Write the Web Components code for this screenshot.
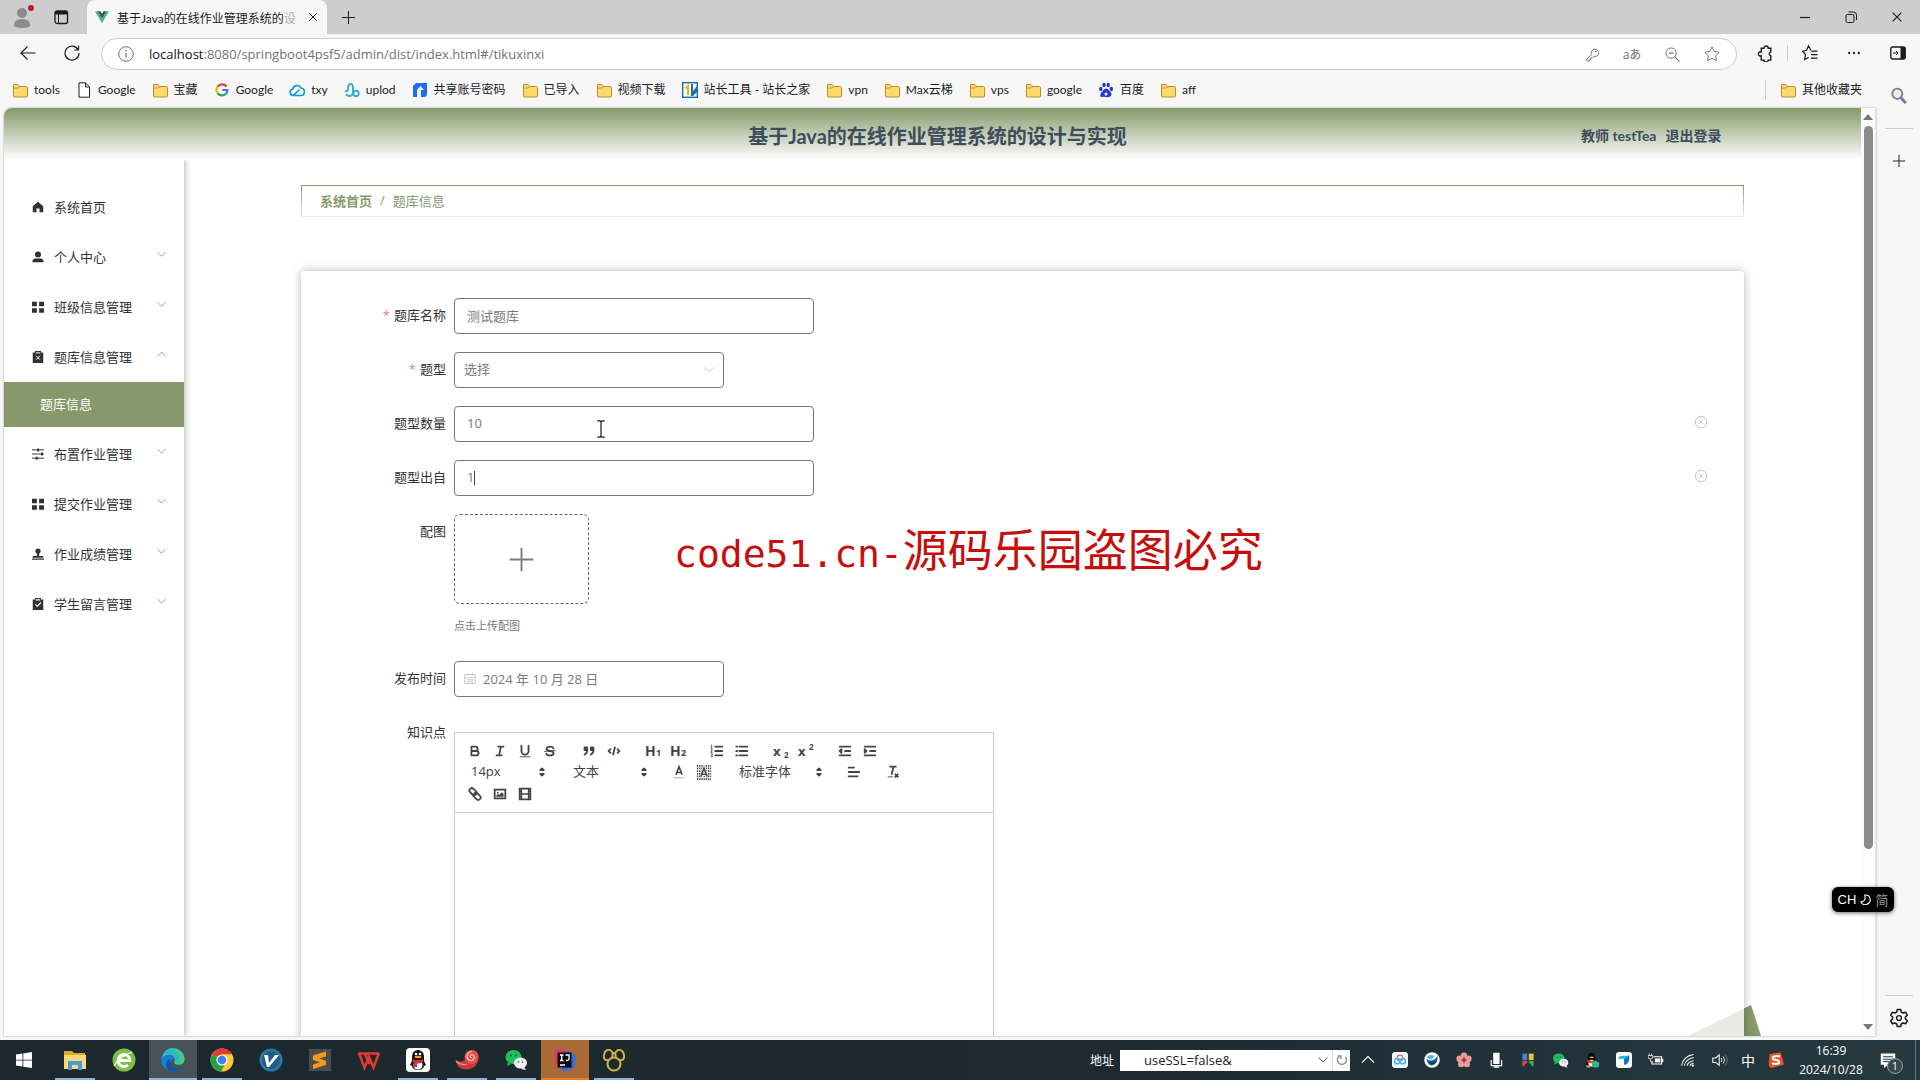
<!DOCTYPE html>
<html lang="zh-CN">
<head>
<meta charset="utf-8">
<title>基于Java的在线作业管理系统的设计与实现</title>
<style>
html,body{margin:0;height:100%}
body{overflow:hidden;font-family:"Open Sans","Noto Sans CJK SC",sans-serif;font-size:12px;color:#1b1b1b;background:#f7f7f7}
</style>
</head>
<body>
<desktop-shell></desktop-shell>
<script>
const FOLDER='<path d="M1.5 2.5h4.5l1.500 2h7q1 0 1 1v8.500q0 1-1 1h-12q-1 0-1-1z" fill="#ffd96b" stroke="#b98d2b"/><path d="M1.500 6h4.500l2-1.500" fill="none" stroke="#c79a35"/>';
const WECHAT='<ellipse cx="9.500" cy="9" rx="8" ry="7" fill="#1fc05c"/><path d="M4 14l-1 4 4-2z" fill="#1fc05c"/><circle cx="7" cy="7.500" r="1" fill="#0c5a2a"/><circle cx="12" cy="7.500" r="1" fill="#0c5a2a"/><ellipse cx="16.500" cy="15" rx="6.500" ry="5.500" fill="#f2f2f2"/><path d="M20 19l2 3-5-1z" fill="#f2f2f2"/><circle cx="14.500" cy="14" r=".9" fill="#777"/><circle cx="18.500" cy="14" r=".9" fill="#777"/>';
const S='fill="none" stroke="currentColor"';
/* name: [viewBox side, markup] */
const ICONS={
 folder:[16,FOLDER],
 profile:[24,'<circle cx="11" cy="8" r="5" fill="#8f8b8a"/><path d="M3 20q0-6 8-6t8 6q0 3-8 3t-8-3z" fill="#8f8b8a"/><circle cx="20" cy="3" r="3" fill="#b3202c"/>'],
 tabs:[16,`<rect x="2" y="2" width="12.500" height="12.500" rx="2" ${S} stroke-width="1.300"/><path d="M2 3.500q0-1.500 1.500-1.500h9.500q1.500 0 1.500 1.500V5.500H2z"/><path d="M5.500 5v9" ${S}/>`],
 vue:[16,'<path d="M0 1.500h3.200L8 9.800l4.800-8.300H16L8 15z" fill="#41b883"/><path d="M3.200 1.500h3L8 4.600l1.800-3.100h3L8 9.800z" fill="#35495e"/>'],
 close:[16,`<path d="M3 3l10 10M13 3L3 13" ${S} stroke-width="1.300"/>`],
 plus:[16,`<path d="M8 1v14M1 8h14" ${S} stroke-width="1.100"/>`],
 min:[16,`<path d="M3 8.500h10" ${S} stroke-width="1.200"/>`],
 restore:[16,`<rect x="3" y="5.500" width="8" height="8" rx="1.500" ${S}/><path d="M5.500 3h5q3 0 3 3v5" ${S}/>`],
 back:[16,`<path d="M15.500 8H1M7.500 1.500L1 8l6.500 6.500" ${S} stroke-width="1.100"/>`],
 reload:[16,`<path d="M14 4.500A7 7 0 1 0 15 8M14.500.8V5h-4.200" ${S} stroke-width="1.200"/>`],
 info:[16,`<circle cx="8" cy="8" r="7.300" ${S}/><path d="M8 7v4.500M8 4.300v1.400" ${S} stroke-width="1.200"/>`],
 key:[16,`<path d="M7 8.200A4 4 0 1 1 9.400 10.200L8 11.500H6.500V13H5v1.700H1.800V13z" ${S}/><circle cx="11.500" cy="4.700" r=".9"/>`],
 zoomout:[16,`<circle cx="6.500" cy="6.500" r="5.500" ${S}/><path d="M10.500 10.500l5 5M4 6.500h5" ${S} stroke-width="1.200"/>`],
 star:[16,`<path d="M8 .9l2.200 4.600 5 .7-3.600 3.500.9 5L8 12.300l-4.500 2.400.9-5L.8 6.200l5-.7z" ${S}/>`],
 puzzle:[16,`<path d="M4 3h2.500a2 2 0 0 1 4 0H13v3.500a1.900 1.900 0 0 0 0 3.700v4h-2.500a2 2 0 0 1-4 0H4v-4a2 2 0 1 1 0-3.700z" ${S} stroke-width="1.300"/>`],
 favs:[16,`<path d="M9 5.500L6.500.8 4.500 5.500l-4 .7 3 3.300-.9 5 4-2.300M9.500 6.200H15.500M9 9.700h6.500M9 13.200h6.500" ${S} stroke-width="1.200"/>`],
 more:[16,'<circle cx="2.500" cy="8" r="1.300"/><circle cx="8" cy="8" r="1.300"/><circle cx="13.500" cy="8" r="1.300"/>'],
 panel:[16,`<rect x=".8" y="2" width="14.400" height="12" rx="2" ${S} stroke-width="1.400"/><path d="M10.500 2h3q2 0 2 2v8q0 2-2 2h-3z"/><path d="M3 8h5M6 6l2 2-2 2" ${S}/>`],
 doc:[16,'<path d="M3 .8h6.500L13.500 5v10.200H3zM9.500.8V5h4" fill="#fff" stroke="#222"/>'],
 google:[18,'<path d="M14 5A6.200 6.200 0 0 0 4 5.500" fill="none" stroke="#e34133" stroke-width="2.500"/><path d="M3.800 5.700a6 6 0 0 0 0 6.600" fill="none" stroke="#f3b605" stroke-width="2.500"/><path d="M4 12.500a6.200 6.200 0 0 0 9.200 1" fill="none" stroke="#32a350" stroke-width="2.500"/><path d="M9.300 9h5.700q0 3-1.800 4.700" fill="none" stroke="#3b7ded" stroke-width="2.500"/>'],
 txy:[16,'<path d="M4 13.500a3.200 3.200 0 0 1-.3-6.300A4.400 4.400 0 0 1 12 6a3.800 3.800 0 0 1 .5 7.500H4.500l6-6" fill="none" stroke="#159ad8" stroke-width="1.700"/>'],
 uplod:[16,'<path d="M1 9q3 1 3-2 0-5 2.500-5T9 6v4q0 4-3 4T2 12" fill="none" stroke="#37a9d6" stroke-width="1.900"/><circle cx="12" cy="11.500" r="2.700" fill="none" stroke="#37a9d6" stroke-width="1.900"/>'],
 share:[16,'<path d="M4 1h11v11q0 3-3 3H9V8h3L8.500 4 5 8v7H1V4z" fill="#1f6df0"/>'],
 zhan:[16,'<rect x=".7" y=".7" width="14.600" height="14.600" fill="#fff" stroke="#1b6fa8" stroke-width="1.400"/><path d="M2 6l5-4v11H5V7z" fill="#f2b31b"/><path d="M9 2h2v7l4-5v6l-4 4H9z" fill="#1b6fa8"/>'],
 baidu:[16,'<g fill="#2a37d4"><ellipse cx="2.800" cy="7" rx="1.700" ry="2.200"/><ellipse cx="6" cy="3" rx="1.700" ry="2.300"/><ellipse cx="10.200" cy="3" rx="1.700" ry="2.300"/><ellipse cx="13.300" cy="7" rx="1.700" ry="2.200"/><path d="M8 6.500q2 0 3.200 2.300 3 2.200 2 4.700Q12 15.700 8 15t-5 .2q-2-3 1.500-6Q6 6.500 8 6.500z"/></g><circle cx="8" cy="12" r="1.500" fill="#fff"/>'],
 search:[16,'<circle cx="6.500" cy="6" r="4.500" fill="#e6eef6" stroke="#7c7c80" stroke-width="1.600"/><path d="M10 9.800l4 4.500" stroke="#8068b5" stroke-width="2.500"/>'],
 gear:[20,`<path d="M8.300 1.500h3.400l.6 2.500 1.800 1 2.500-.8 1.700 3-1.900 1.800v2l1.900 1.800-1.700 3-2.500-.8-1.800 1-.6 2.500H8.300L7.700 16l-1.800-1-2.500.8-1.700-3L3.600 11V9L1.700 7.200l1.700-3 2.500.8 1.800-1z" ${S} stroke-width="1.500" stroke-linejoin="round"/><circle cx="10" cy="10" r="2.400" ${S} stroke-width="1.400"/>`],
 home:[16,'<path d="M8 1l7 6v8h-5v-5H6v5H1V7z"/>'],
 user:[16,'<circle cx="8" cy="4.500" r="4"/><path d="M.5 15q0-5 4.500-5h6q4.500 0 4.500 5z"/>'],
 grid:[16,'<path d="M0 1h6.500v6H0zM9.500 1H16v6H9.500zM0 9.500h6.500v6H0zM9.500 9.500H16v6H9.500z"/>'],
 clipx:[16,'<path d="M1 2h3V0h8v2h3v14H1z"/><path d="M5 2.500h6M5.500 6.500l5 5M10.500 6.500l-5 5" stroke="#fff" stroke-width="1.300"/>'],
 clipcheck:[16,'<path d="M1 2h3V0h8v2h3v14H1z"/><path d="M5 2.500h6M4.500 8.500l2.500 2.500 5-5" fill="none" stroke="#fff" stroke-width="1.500"/>'],
 sliders:[16,`<path d="M0 2.500h16M0 8h16M0 13.500h16" ${S} stroke-width="1.300"/><path d="M7 .5h2.500v4H7zM12 6h2.500v4H12zM5 11.500h2.500v4H5z"/>`],
 stamp:[16,'<circle cx="8" cy="4" r="3.500"/><path d="M6.500 6h3v4.500H15v2.500H1v-2.500h5.500zM0 14h16v1.500H0z"/>'],
 down:[16,`<path d="M1 4l7 7 7-7" ${S} stroke-width="1.300"/>`],
 up:[16,`<path d="M1 11l7-7 7 7" ${S} stroke-width="1.300"/>`],
 clear:[16,`<circle cx="8" cy="8" r="6.500" ${S}/><path d="M6 6l4 4M10 6l-4 4" ${S}/>`],
 calendar:[16,`<path d="M1 2h14v12H1zM1 6h14M4.500 .5v3M11.500 .5v3M3.500 9h9M3.500 11.500h9" ${S}/>`],
 bold:[18,`<path d="M5 4H9.500a2.500 2.500 0 0 1 0 5H5zM5 9h5.500a2.500 2.500 0 0 1 0 5H5z" ${S} stroke-width="2" stroke-linejoin="round"/>`],
 italic:[18,`<path d="M7 4h6M5 14h6M8 14L10 4" ${S} stroke-width="2" stroke-linecap="round"/>`],
 underline:[18,`<path d="M5 3v6a4 4 0 0 0 8 0V3" ${S} stroke-width="2" stroke-linecap="round"/><path d="M3 15.500h12" ${S}/>`],
 strike:[18,`<path d="M13 6Q12 4 9 4T5 6.500Q5 8.500 9 9t4 2.500Q13 14 9 14t-4-2" ${S} stroke-width="2" stroke-linecap="round"/><path d="M15.500 8.500l-13 1" stroke="currentColor"/>`],
 quote:[18,`<path d="M4 5h3v3H4zM11 5h3v3h-3z" fill="currentColor" stroke="currentColor" stroke-width="2" stroke-linejoin="round"/><path d="M7 8c0 4-3 5-3 5M14 8c0 4-3 5-3 5" ${S} stroke-width="2" stroke-linecap="round"/>`],
 code:[18,`<path d="M5 7L3 9l2 2M13 7l2 2-2 2M10 5L8 13" ${S} stroke-width="2" stroke-linecap="round"/>`],
 ol:[18,`<path d="M7 4h8M7 9h8M7 14h8" ${S} stroke-width="2" stroke-linecap="round"/><path d="M2 2.500h1V6M2 6.500h2M2 8h1.500q.5 1-1.500 2.500h2M2 12.500h2l-1 1.500q1 0 1 1t-2 .5" ${S}/>`],
 ul:[18,`<path d="M6 4h9M6 9h9M6 14h9M2.500 4h1M2.500 9h1M2.500 14h1" ${S} stroke-width="2" stroke-linecap="round"/>`],
 outdent:[18,`<path d="M3 14h12M3 4h12M9 9h6" ${S} stroke-width="2" stroke-linecap="round"/><path d="M5 7v4L3 9z" stroke="currentColor" stroke-width="2" stroke-linejoin="round"/>`],
 indent:[18,`<path d="M3 14h12M3 4h12M9 9h6" ${S} stroke-width="2" stroke-linecap="round"/><path d="M3 7v4l2-2z" stroke="currentColor" stroke-width="2" stroke-linejoin="round"/>`],
 color:[18,`<path d="M5.500 12L9 3l3.500 9M6.500 9.500h5" ${S} stroke-width="1.800"/><path d="M3 15.500h12" ${S} stroke-opacity=".5"/>`],
 background:[18,`<path d="M1 2h16M1 5h16M1 8h16M1 11h16M1 14h16M1 17h16" ${S} stroke-width="2" stroke-dasharray="1.500 1"/><path d="M6 14L9 5l3 9M7 11.500h4" fill="none" stroke="#fff" stroke-width="3.500"/><path d="M5.500 14L9 4.500l3.500 9.500M6.500 11.500h5" ${S} stroke-width="1.800"/>`],
 align:[18,`<path d="M3 9h12M3 14h10M3 4h6" ${S} stroke-width="2" stroke-linecap="round"/>`],
 clean:[18,`<path d="M5 3h8M9.600 3L7.400 12M11 11l4 4M15 11l-4 4" ${S} stroke-width="2"/><path d="M3 14.500h6" ${S}/>`],
 link:[18,`<g transform="rotate(45 9 9)"><rect x="1" y="6" width="9" height="5.500" rx="2.700" ${S} stroke-width="2"/><rect x="8" y="6.500" width="9" height="5.500" rx="2.700" ${S} stroke-width="2"/></g>`],
 image:[18,`<path d="M3 4h12v10H3z" ${S} stroke-width="2"/><circle cx="6.500" cy="7.500" r="1"/><path d="M5 12v-2l2-1 1 1 3-3 2 2v3z"/>`],
 video:[18,`<path d="M3 3h12v12H3z" ${S} stroke-width="2"/><path d="M5 3v12M13 3v12M5 9h8M3 6h2M3 9h2M3 12h2M13 6h2M13 9h2M13 12h2" ${S} stroke-width="1.600"/>`],
 updown:[18,`<path d="M7 11l2 2 2-2zM7 7l2-2 2 2z" stroke="currentColor" stroke-width="2" stroke-linejoin="round"/>`],
 windows:[16,'<path d="M0 2.500l6.500-1V7.700H0zM7.300 1.400L16 0v7.700H7.300zM0 8.400h6.500v6.200L0 13.600zM7.300 8.400H16V16l-8.700-1.300z" fill="#fff"/>'],
 explorer:[24,'<path d="M1 3h8l2 2h11v3H1z" fill="#e0a92e"/><path d="M1 7h22v14H1z" fill="#f9d977"/><path d="M5 13h14v9h-4v-5H9v5H5z" fill="#469bd8"/>'],
 greene:[24,'<circle cx="12" cy="12" r="11.500" fill="#7ac143"/><path d="M6 12.500h12a6 6 0 1 0-2 4.500" fill="none" stroke="#fff" stroke-width="2.800"/><path d="M2 18Q7 9 20 4" fill="none" stroke="#fff" stroke-width="1.300"/>'],
 edge:[24,'<path d="M.5 12A11.500 11.500 0 0 1 23.500 11q0 5.500-6 5.500-4.500 0-4.500-2.500 2-4-2-6.500T.5 12z" fill="#2fb9c4"/><path d="M12 .5A11.500 11.500 0 0 1 23.500 11q0 5.500-6 5.500-3 0-4-1.500 7 0 5-6T12 .5z" fill="#4fce7a"/><path d="M.5 12q1.500-5 7.500-5 4 .5 5 4-5 1-4 6t9 5Q12 25 6 21.500T.5 12z" fill="#1581d6"/><path d="M9 14q0 7 7 7 3 0 5.500-2.500-3 5-9.500 5-7 0-7-7 .500-4.500 4-5.500z" fill="#0f56ab"/>'],
 chrome:[24,'<circle cx="12" cy="12" r="11.500" fill="#fcc934"/><path d="M12 12L2 6.200A11.500 11.500 0 0 1 22 6.200H12z" fill="#e33b2e"/><path d="M2 6.200A11.500 11.500 0 0 0 11 23.500l5-9z" fill="#25a049"/><circle cx="12" cy="12" r="5.600" fill="#fff"/><circle cx="12" cy="12" r="4.400" fill="#3f7fe8"/>'],
 vapp:[24,'<circle cx="12" cy="12" r="11.500" fill="#2c79a8"/><circle cx="12" cy="12" r="9" fill="#215c85"/><path d="M5 7h4l1 8 6-8h4L10 19H8z" fill="#fff"/>'],
 sublime:[24,'<path d="M1 1h22v22H1z" fill="#4c4c4c"/><path d="M5 7.500l13-4v5l-7 2 7 2.300V17l-13 4v-4.500l7-2.300-7-2.200z" fill="#f89b1c"/>'],
 wps:[24,'<path d="M1 5.500h21M2 5l5.500 14.500L12 9l4.500 10.500L22 5M7.500 5l5 11" fill="none" stroke="#e33a2f" stroke-width="2.600"/>'],
 qq:[24,'<rect x="0" y="0" width="24" height="24" rx="4" fill="#fff"/><path d="M6 13Q5 2 12 2t6 11l2 4-2 1q-1 4-6 4t-6-4l-2-1z" fill="#111"/><ellipse cx="12" cy="17" rx="4.500" ry="4.500" fill="#fff"/><path d="M7 11q5 3 10 0v3q-5 3-10 0zM8 14h3v5H8z" fill="#e22b34"/><ellipse cx="12" cy="9" rx="3.500" ry="1.200" fill="#f5a21c"/><circle cx="10" cy="6" r="1.300" fill="#fff"/><circle cx="14" cy="6" r="1.300" fill="#fff"/>'],
 snail:[24,'<path d="M.5 12q5 3 9.500 0-1-10 8-10 6 1 5.500 8-.5 10-11 11.500Q2 22 .5 12z" fill="#c93a36"/><circle cx="16.500" cy="9" r="7" fill="#e0544d"/><path d="M17 9.500q-2.500 0-1.500-2 2-1.500 3.500.5 1 3-2 4.500-4 .5-5-3.500 0-5 5-5.500" fill="none" stroke="#f9c0b8" stroke-width="1.200"/><path d="M1 13q5 5 11 3" fill="none" stroke="#f08f86" stroke-width="1.200"/>'],
 wechat:[24,WECHAT],
 idea:[24,'<path d="M2 2l8-1 6 5-3 9-11 3z" fill="#e8306b"/><path d="M14 2l9 6-2 12-11 4-3-8z" fill="#2f6fe8"/><path d="M4.500 4.500h14v15h-14z" fill="#080808"/><path d="M7 7h3.500M8.700 7v5.500M7 12.500h3.500M12.500 7H16v4q0 1.500-3 1.500M7 17h5" stroke="#fff" stroke-width="1.300" fill="none"/>'],
 tomcat:[24,'<circle cx="12" cy="16" r="6.500" fill="none" stroke="#d5b34a" stroke-width="2"/><path d="M7 12Q1 13 2 7t6-5q4 2 2 7M17 12q6 1 5-5t-6-5q-4 2-2 7M10 6q2-2 4 0" fill="none" stroke="#d5b34a" stroke-width="1.900"/>'],
 refresh:[16,'<path d="M12.500 4A6 6 0 1 1 5 2.600M2.500 2.500h4v4" fill="none" stroke="#8a8a8a" stroke-width="1.800"/>'],
 cloud:[20,'<rect width="20" height="20" rx="4" fill="#f2f8fc"/><circle cx="10" cy="7.500" r="3.500" fill="none" stroke="#e85d74" stroke-width="1.500"/><circle cx="6.500" cy="11.500" r="3.300" fill="none" stroke="#3bb5e6" stroke-width="1.800"/><circle cx="13.500" cy="11.500" r="3.300" fill="none" stroke="#3bb5e6" stroke-width="1.800"/>'],
 bird:[20,'<circle cx="10" cy="10" r="9.700" fill="#fff"/><path d="M3 8q4 4 8 2 4-1 6-6 1 11-7 13-6-1-7-9z" fill="#1d5fa8"/><path d="M3.500 6.500Q8 2 13 5l-3 4q-3 1-6.500-2.500z" fill="#45bfe8"/><path d="M5 12q5 3 11-3-2 7-7 7-3-1-4-4z" fill="#123a6b"/>'],
 flower:[20,'<g fill="#ef9a9b"><circle cx="10" cy="4.500" r="4"/><circle cx="15.500" cy="8.500" r="4"/><circle cx="13.500" cy="15" r="4"/><circle cx="6.500" cy="15" r="4"/><circle cx="4.500" cy="8.500" r="4"/></g><path d="M6 10h8M10 6v8" stroke="#a33c4b" stroke-width="1.500"/>'],
 mic:[20,'<rect x="6.500" y="1" width="8" height="14" rx="1" fill="#fff"/><path d="M4 10v7h13v-7M10.500 17v2.500M7 19h7" fill="none" stroke="#fff" stroke-width="1.500"/>'],
 flags:[20,'<path d="M3 2h6v8H3z" fill="#3f83e8"/><path d="M11 2h6v8h-6z" fill="#efc22b"/><path d="M3 11h6v2l-6 6z" fill="#e24436"/><path d="M11 11h6v8l-6-6z" fill="#37a853"/>'],
 qqmini:[20,'<path d="M5 10Q4 1 9.500 1T14 10l3 6-3 1H5l-3-1z" fill="#0a0a0a"/><ellipse cx="9.500" cy="14" rx="4" ry="4" fill="#fff"/><path d="M4 10q6 3 11 0v3q-6 2-11 0z" fill="#e22b34"/><ellipse cx="9.500" cy="6.500" rx="3" ry="1" fill="#f5a21c"/><path d="M3 18h5" stroke="#f5a21c" stroke-width="2.500"/><ellipse cx="14.500" cy="15.500" rx="4.500" ry="4" fill="#1fc08c"/>'],
 plane:[20,'<rect width="20" height="20" rx="4" fill="#fff"/><path d="M2.500 8Q3 5 7 5l10-.5q-1 3-3 4.500z" fill="#11bfe0"/><path d="M16.500 4.500q1 12-6.500 11.500V9z" fill="#1573d6"/>'],
 battery:[20,'<path d="M7 6h10v9H5v-3M18.500 8.500v4" fill="none" stroke="#fff" stroke-width="1.400"/><path d="M8.500 8h7v5h-7z" fill="#fff"/><path d="M0 4.500h6v3q-3 3-6 0zM3 9v3h3M1.500 2v2.500M4.500 2v2.500" fill="none" stroke="#fff"/>'],
 wifi:[20,'<path d="M2 17Q4 5 17 3M5.500 17Q7 9 17 7M9 17q1-5 8-6M12.500 17q.5-2.500 4.500-2.500" fill="none" stroke="#fff" stroke-width="1.300"/><circle cx="16" cy="17" r="1.500" fill="#fff"/>'],
 volume:[20,'<path d="M1 7.500h3.500L9 3.500v13L4.500 13H1z" fill="none" stroke="#fff" stroke-width="1.300"/><path d="M11.500 7.500q2 2.500 0 5M14 5.500q3.500 4.500 0 9" fill="none" stroke="#fff"/><path d="M16.500 3.500q5 6.500 0 13" fill="none" stroke="#788287"/>'],
 sogou:[20,'<path d="M2 2.500l14-2 4 15-15 4.500q-4 0-4-5z" fill="#e9562c"/><path d="M15 5.500Q6 4 6 7.500q0 2 4 2.500t4 3q-1 3-9 1.500" fill="none" stroke="#fff" stroke-width="2.600"/>'],
 notice:[20,'<path d="M1 2h18v14h-9l-5 4v-4H1z" fill="#fff"/><path d="M4 6h12M4 9h12M4 12h9" stroke="#1f2f36" stroke-width="1.300"/>'],
 moon:[16,`<path d="M7 1.500a7 7 0 1 1-5.500 10Q9 11 7 1.500z" ${S} stroke-width="1.600"/>`],
 ibeam:[20,`<path d="M6 1h3l1 1 1-1h3M10 2v16M6 19h3l1-1 1 1h3" fill="none" stroke="#111" stroke-width="1.300"/>`]
};
function define(name,css,html){
  const t=document.createElement('template');
  customElements.define(name,class extends HTMLElement{
    connectedCallback(){
      if(this.shadowRoot)return;
      t.innerHTML=`<style>*{box-sizing:border-box}button,input,select{font:inherit;color:inherit;margin:0}button{border:0;background:none;padding:0;display:grid;place-items:center}a{color:inherit;text-decoration:none}${css}</style>`+(typeof html==='function'?html(this):html);
      this.attachShadow({mode:'open'}).append(t.content.cloneNode(true));
    }
  });
}
const icon=(n,s=16)=>`<ui-icon name="${n}" size="${s}"></ui-icon>`;
const btn=(n,label,s=16)=>`<button type="button" aria-label="${label}">${icon(n,s)}</button>`;

define('ui-icon',':host{display:block;flex:none}svg{display:block;fill:currentColor}',el=>{
  const [v,m]=ICONS[el.getAttribute('name')],s=el.getAttribute('size');
  return `<svg width="${s}" height="${s}" viewBox="0 0 ${v} ${v}" aria-hidden="true">${m}</svg>`;
});

define('tab-strip',`
:host{display:flex;height:34px;background:#cdcdcd;align-items:center}
button{width:38px;height:34px}
.lead{width:87px;display:flex;padding-left:4px}
.tab{width:240px;height:34px;background:#f7f7f7;border-radius:8px 8px 0 0;display:flex;align-items:center;padding:0 8px;gap:8px;margin-right:2px}
.tab span{flex:1;white-space:nowrap;font-family:Lato,"Noto Sans CJK SC",sans-serif}
.tab span i{font-style:normal;color:#aaa}
.tab button{width:12px;height:16px}
.win{margin-left:auto;display:flex}.win button{width:46px}`,
`<div class="lead">${btn('profile','个人资料',24)}${btn('tabs','标签页操作')}</div>
<div class="tab">${icon('vue',14)}<span>基于Java的在线作业管理系统的<i>设</i></span>${btn('close','关闭标签页',12)}</div>
${btn('plus','新建标签页',15)}
<div class="win">${btn('min','最小化')}${btn('restore','还原')}${btn('close','关闭',14)}</div>`);

define('address-bar',`
:host{display:flex;height:38px;align-items:center;background:#f7f7f7;padding-left:6px}
button{width:44px;height:32px}
.box{flex:1;height:32px;margin:2px 6px 0 7px;background:#fff;border:1px solid #ccc;border-radius:16px;display:flex;align-items:center;color:#737373;padding:0 4px 0 16px}
.url{flex:1;font-size:13px;line-height:20px;margin-left:15px;white-space:nowrap}
.url b{font-weight:400;color:#111}
.box button{width:40px}.box button.tr{font-size:12px}
.sep{width:1px;height:16px;background:#ccc}
`,
`${btn('back','后退')}${btn('reload','刷新')}
<div class="box">${icon('info')}<a class="url" href="#/tikuxinxi"><b>localhost</b>:8080/springboot4psf5/admin/dist/index.html#/tikuxinxi</a>${btn('key','密码',15)}<button type="button" class="tr">aあ</button>${btn('zoomout','缩放',15)}${btn('star','收藏')}</div>
${btn('puzzle','扩展',17)}<i class="sep"></i>${btn('favs','收藏夹')}${btn('more','更多',14)}${btn('panel','侧栏')}`);

define('bookmark-item',':host{display:block}a{display:flex;align-items:center;gap:6px;white-space:nowrap;line-height:20px;color:#1b1b1b}',
el=>`<a href="#">${icon(el.getAttribute('icon'))}<slot></slot></a>`);
define('bookmark-bar',`:host{display:flex;gap:16px;height:36px;align-items:center;padding:0 58px 0 12px;font-family:Lato,"Noto Sans CJK SC",sans-serif}
.last{margin-left:auto;border-left:1px solid #ccc;padding-left:14px}`,
[['folder','tools'],['doc','Google'],['folder','宝藏'],['google','Google'],['txy','txy'],['uplod','uplod'],['share','共享账号密码'],['folder','已导入'],['folder','视频下载'],['zhan','站长工具 - 站长之家'],['folder','vpn'],['folder','Max云梯'],['folder','vps'],['folder','google'],['baidu','百度'],['folder','aff']].map(([i,t])=>`<bookmark-item icon="${i}">${t}</bookmark-item>`).join('')+'<bookmark-item class="last" icon="folder">其他收藏夹</bookmark-item>');

define('side-rail',`:host{display:flex;flex-direction:column;align-items:center;width:43px;padding-bottom:8px}
button{width:28px;height:28px}hr{width:28px;border:0;border-top:1px solid #ccc;margin:0}
.top{margin-top:-26px}.a{margin-top:18px}.b{margin-top:18px}.end{margin-top:auto}.end+button{margin-top:8px}`,
`<button class="top" type="button" aria-label="搜索">${icon('search',18)}</button><hr class="a"><div class="b">${btn('plus','自定义',14)}</div><hr class="end">${btn('gear','设置',20)}`);

define('scroll-rail',`:host{display:flex;flex-direction:column;align-items:center;justify-content:space-between;width:15px;background:#fcfcfc;padding:6px 0 6px;border-right:1px solid #e3e3e3}
i{border:5px solid transparent}.u{border-bottom:6px solid #777;border-top:0}.d{border-top:6px solid #777;border-bottom:0}
div{flex:1;width:9px;margin:6px 0}div b{display:block;height:81%;background:#8b8b8b;border-radius:5px}`,
`<i class="u"></i><div><b></b></div><i class="d"></i>`);

define('app-header',`:host{display:flex;height:52px;padding-top:3px;box-sizing:border-box;background:linear-gradient(#87996b,#fff);align-items:center;color:#3d4d5c;font-weight:700;font-family:Lato,"Noto Sans CJK SC",sans-serif}
h1{flex:1;margin:0;font-size:20px;line-height:28px;text-align:center;padding-left:290px}
nav{width:145px;box-sizing:content-box;display:flex;gap:9px;font-size:14px;line-height:20px;padding-right:135px;white-space:nowrap}`,
`<h1>基于Java的在线作业管理系统的设计与实现</h1><nav><span>教师 testTea</span><a href="#">退出登录</a></nav>`);

define('menu-item',`:host{display:block}
button,a{width:100%;height:50px;display:flex;align-items:center;padding:0 18px 0 28px;gap:10px;font-size:13px;color:#303133}
span{flex:1;text-align:left;padding-bottom:2px}.ch{padding-bottom:6px;color:#777}
:host([active]) a{height:45px;background:#87996b;color:#fff;padding-left:36px}
:host([active]){padding-bottom:2px}`,
el=>el.hasAttribute('active')?'<a href="#/tikuxinxi"><span><slot></slot></span></a>':
`<button type="button">${icon(el.getAttribute('icon'),12)}<span><slot></slot></span>${el.hasAttribute('arrow')?`<div class="ch">${icon(el.getAttribute('arrow'),9)}</div>`:''}</button>`);
define('side-menu',`:host{display:block;width:180px;padding-top:22px;background:#fff;box-shadow:1px 0 6px rgba(0,0,0,.3);clip-path:inset(0 -12px 0 0)}`,
`<menu-item icon="home">系统首页</menu-item>
<menu-item icon="user" arrow="down">个人中心</menu-item>
<menu-item icon="grid" arrow="down">班级信息管理</menu-item>
<menu-item icon="clipx" arrow="up">题库信息管理</menu-item>
<menu-item active>题库信息</menu-item>
<menu-item icon="sliders" arrow="down">布置作业管理</menu-item>
<menu-item icon="grid" arrow="down">提交作业管理</menu-item>
<menu-item icon="stamp" arrow="down">作业成绩管理</menu-item>
<menu-item icon="clipcheck" arrow="down">学生留言管理</menu-item>`);

define('bread-crumb',`:host{display:flex;height:32px;box-sizing:border-box;align-items:center;gap:8px;padding:0 0 2px 18px;font-size:13px;color:#87996b;border:1px solid;border-image:linear-gradient(#87996b,#eee) 1}
a{font-weight:700}`,`<a href="#">系统首页</a><span>/</span><span>题库信息</span>`);

define('form-row',`:host{display:flex;gap:8px;margin-bottom:18px;font-size:13px}
label{width:145px;height:36px;line-height:34px;text-align:right;color:#333}
label i{font-style:normal;color:#e77f86;margin-right:4px}
.body{flex:1;display:flex;align-items:center;justify-content:space-between;color:#7a7a7a}
.wrap{position:relative;width:360px;height:36px;display:flex;align-items:center}
.wrap.s{width:270px}
input,select{width:100%;height:36px;border:1px solid #777;border-radius:4px;background:#fff;padding:0 12px 2px;outline:0;appearance:none}
select{padding:0 9px 2px}
.date input{padding-left:28px}
.wrap ui-icon{position:absolute;color:#bbb}
.wrap .arr{right:10px}.wrap .cal{left:10px}.wrap .beam{left:138px;top:14px}
.caret{position:absolute;left:20px;top:11px;width:1px;height:14px;background:#444}
.clear{margin:0 36px 4px 0;color:#bbb;width:14px}
.up{display:block}.up button{width:135px;height:90px;border:1px dashed #666;border-radius:6px;background:#fff}
.up p{margin:5px 0 0;font-size:11px;line-height:34px}`,
el=>{
 const k=el.getAttribute('kind'),v=el.getAttribute('value')||'';
 let b='';
 if(k==='text')b=`<div class="body"><div class="wrap"><input id="f" type="text" value="${v}">${el.hasAttribute('pointer')?'<ui-icon class="beam" name="ibeam" size="18"></ui-icon>':''}${el.hasAttribute('caret')?'<i class="caret"></i>':''}</div>${el.hasAttribute('clearable')?`<button class="clear" type="button" aria-label="清空">${icon('clear',14)}</button>`:''}</div>`;
 if(k==='select')b=`<div class="body"><div class="wrap s"><select id="f"><option>${v}</option></select><ui-icon class="arr" name="down" size="10"></ui-icon></div></div>`;
 if(k==='date')b=`<div class="body"><div class="wrap s date"><input id="f" type="text" value="${v}"><ui-icon class="cal" name="calendar" size="12"></ui-icon></div></div>`;
 if(k==='upload')b=`<div class="body up"><button id="f" type="button" aria-label="上传">${icon('plus',27)}</button><p>${v}</p></div>`;
 if(k==='rich')b='<rich-editor id="f"></rich-editor>';
 return `<label for="f">${el.hasAttribute('required')?'<i>*</i>':''}<slot></slot></label>${b}`;
});

const T=(a,b,y,s=9)=>`<button type="button"><svg width="18" height="18" viewBox="0 0 18 18" fill="#444" font-family="Open Sans" font-weight="700"><text x="1" y="14" font-size="${a==='H'?14:13}">${a}</text><text x="12" y="${y}" font-size="${s}">${b}</text></svg></button>`;
const tb=l=>l.map(n=>btn(n,n)).join('');
const pick=(w,t,l)=>`<label class="${w}"><select aria-label="${l}"><option>${t}</option></select>${icon('updown')}</label>`;
define('rich-editor',`:host{display:block;box-sizing:border-box;width:540px;height:420px;margin-top:17px;border:1px solid #ccc;color:#444;background:#fff}
.bar{height:80px;border-bottom:1px solid #ccc;padding:7px 7px 0}
.row{display:flex;gap:14px;height:21px}.g{display:flex}
.row+.row+.row{margin-top:1px}
button{width:25px;height:22px}
label{display:flex;align-items:center;width:88px}label.w{width:97px}
select{flex:1;min-width:0;border:0;background:none;appearance:none;padding:0 0 2px 9px;font-size:13px;outline:0}`,
`<div class="bar">
<div class="row"><div class="g">${tb(['bold','italic','underline','strike'])}</div><div class="g">${tb(['quote','code'])}</div><div class="g">${T('H','1',14)}${T('H','2',14)}</div><div class="g">${tb(['ol','ul'])}</div><div class="g">${T('x','2',16,8)}${T('x','2',8,8)}</div><div class="g">${tb(['outdent','indent'])}</div></div>
<div class="row">${pick('n','14px','字号')}${pick('n','文本','标题')}<div class="g">${tb(['color','background'])}</div>${pick('w','标准字体','字体')}<div class="g">${tb(['align'])}</div><div class="g">${tb(['clean'])}</div></div>
<div class="row"><div class="g">${tb(['link','image','video'])}</div></div></div>`);

define('app-page',`:host{display:grid;grid-template-rows:52px 1fr;background:#fff;overflow:hidden;position:relative;border-top-left-radius:8px}
.main{display:flex;min-height:0}
.content{flex:1;padding:25px 117px 0;min-width:0}
.card{display:block;position:relative;margin-top:54px;padding-top:27px;height:900px;background:rgba(255,255,255,.8);box-shadow:0 0 10px rgba(0,0,0,.3);border-radius:4px}
.hill{position:absolute;right:100px;bottom:0}
.mark{position:absolute;left:670px;top:410px;display:flex;align-items:baseline;white-space:nowrap;color:#c80d0d;font:45px/60px "Noto Sans CJK SC",sans-serif;pointer-events:none}
.mark span{font:38px/60px "DejaVu Sans Mono",monospace}`,
`<app-header></app-header>
<div class="main"><side-menu></side-menu><div class="content"><bread-crumb></bread-crumb>
<svg class="hill" width="73" height="31" viewBox="0 0 73 31"><path d="M0 31L63 0l10 31z" fill="#87996b"/></svg>
<form class="card">
<form-row kind="text" value="测试题库" required>题库名称</form-row>
<form-row kind="select" value="选择" required>题型</form-row>
<form-row kind="text" value="10" clearable pointer>题型数量</form-row>
<form-row kind="text" value="1" clearable caret>题型出自</form-row>
<form-row kind="upload" value="点击上传配图">配图</form-row>
<form-row kind="date" value="2024 年 10 月 28 日">发布时间</form-row>
<form-row kind="rich">知识点</form-row>
</form></div></div>
<div class="mark"><span>code51.cn-</span>源码乐园盗图必究</div>`);

define('ime-badge',`:host{position:absolute;right:26px;bottom:168px;display:flex;align-items:center;justify-content:center;gap:4px;width:62px;height:25px;border-radius:6px;background:#000;color:#fff;box-shadow:0 1px 4px rgba(0,0,0,.6);font:13px "Liberation Sans","Noto Sans CJK SC",sans-serif}span+ui-icon+span{color:#999}`,
`<span>CH</span>${icon('moon',11)}<span>简</span>`);

const apps=[['explorer','run'],['greene',''],['edge','on'],['chrome','run'],['vapp',''],['sublime',''],['wps',''],['qq','run'],['snail','run'],['wechat','run'],['idea','hot'],['tomcat','run']];
define('task-bar',`:host{display:flex;height:40px;background:linear-gradient(90deg,#1b282e,#1d2b31 60%,#26393f);color:#fff}
.apps{display:flex;gap:1px;flex:1}
.apps button{width:48px;height:40px}
.apps button:first-child{margin-right:2px}
.run{background:linear-gradient(#8ab4e0,#8ab4e0) center bottom/40px 2px no-repeat}
.apps .on{background:linear-gradient(#8ab4e0,#8ab4e0) center bottom/48px 2px no-repeat #475359}
.apps .hot{background:linear-gradient(#f07a1c,#f07a1c) center bottom/48px 2px no-repeat #a96a35}
.addr{display:flex;align-items:center;gap:6px}
.box{display:flex;align-items:center;width:230px;height:21px;background:#fff;color:#222}
.box input{flex:1;min-width:0;border:0;outline:0;background:none;padding:0 0 0 24px;font-size:13px;height:21px}
.box button{width:18px;height:21px}.box button+button{border-left:1px solid #ddd}
.tray{display:flex;padding:0 4px 0 2px;align-items:center}
.tray button{width:32px;height:40px}.tray .ime{width:24px;font-size:14px}
.clock{width:78px;text-align:center;font-size:12px;line-height:19px}
.tray .note{width:36px;position:relative;margin-right:9px}
.note b{position:absolute;right:3px;bottom:6px;width:16px;height:16px;border:1px solid #9aa3a7;border-radius:50%;background:#37474d;font-size:11px;line-height:14px;font-weight:400}
.end{width:1px;height:40px;background:#66757b}`,
`<div class="apps">${btn('windows','开始')}${apps.map(([n,c])=>`<button type="button" class="${c}" aria-label="${n}">${icon(n,24)}</button>`).join('')}</div>
<div class="addr"><label for="addr">地址</label><div class="box"><input id="addr" type="text" value="useSSL=false&amp;">${btn('down','展开',10)}${btn('refresh','刷新',12)}</div></div>
<div class="tray">${btn('up','显示隐藏的图标',14)}${['cloud','bird','flower','mic','flags'].map(n=>btn(n,n)).join('')}${btn('wechat','wechat',17)}${['qqmini','plane','battery','wifi','volume'].map(n=>btn(n,n)).join('')}<button type="button" class="ime">中</button>${btn('sogou','输入法')}
<div class="clock">16:39<br>2024/10/28</div><button type="button" class="note" aria-label="通知">${icon('notice',16)}<b>1</b></button><i class="end"></i></div>`);

define('desktop-shell',`:host{display:flex;flex-direction:column;height:100vh;position:relative}
.view{flex:1;display:flex;min-height:0}
.frame{flex:1;display:flex;min-width:0;margin:0 1px 4px 4px;box-shadow:0 0 2px rgba(0,0,0,.4);border-top-left-radius:8px}
app-page{flex:1;min-width:0}`,
`<tab-strip></tab-strip><address-bar></address-bar><bookmark-bar></bookmark-bar>
<div class="view"><div class="frame"><app-page></app-page><scroll-rail></scroll-rail></div><side-rail></side-rail></div>
<task-bar></task-bar><ime-badge></ime-badge>`);
</script>
</body>
</html>
